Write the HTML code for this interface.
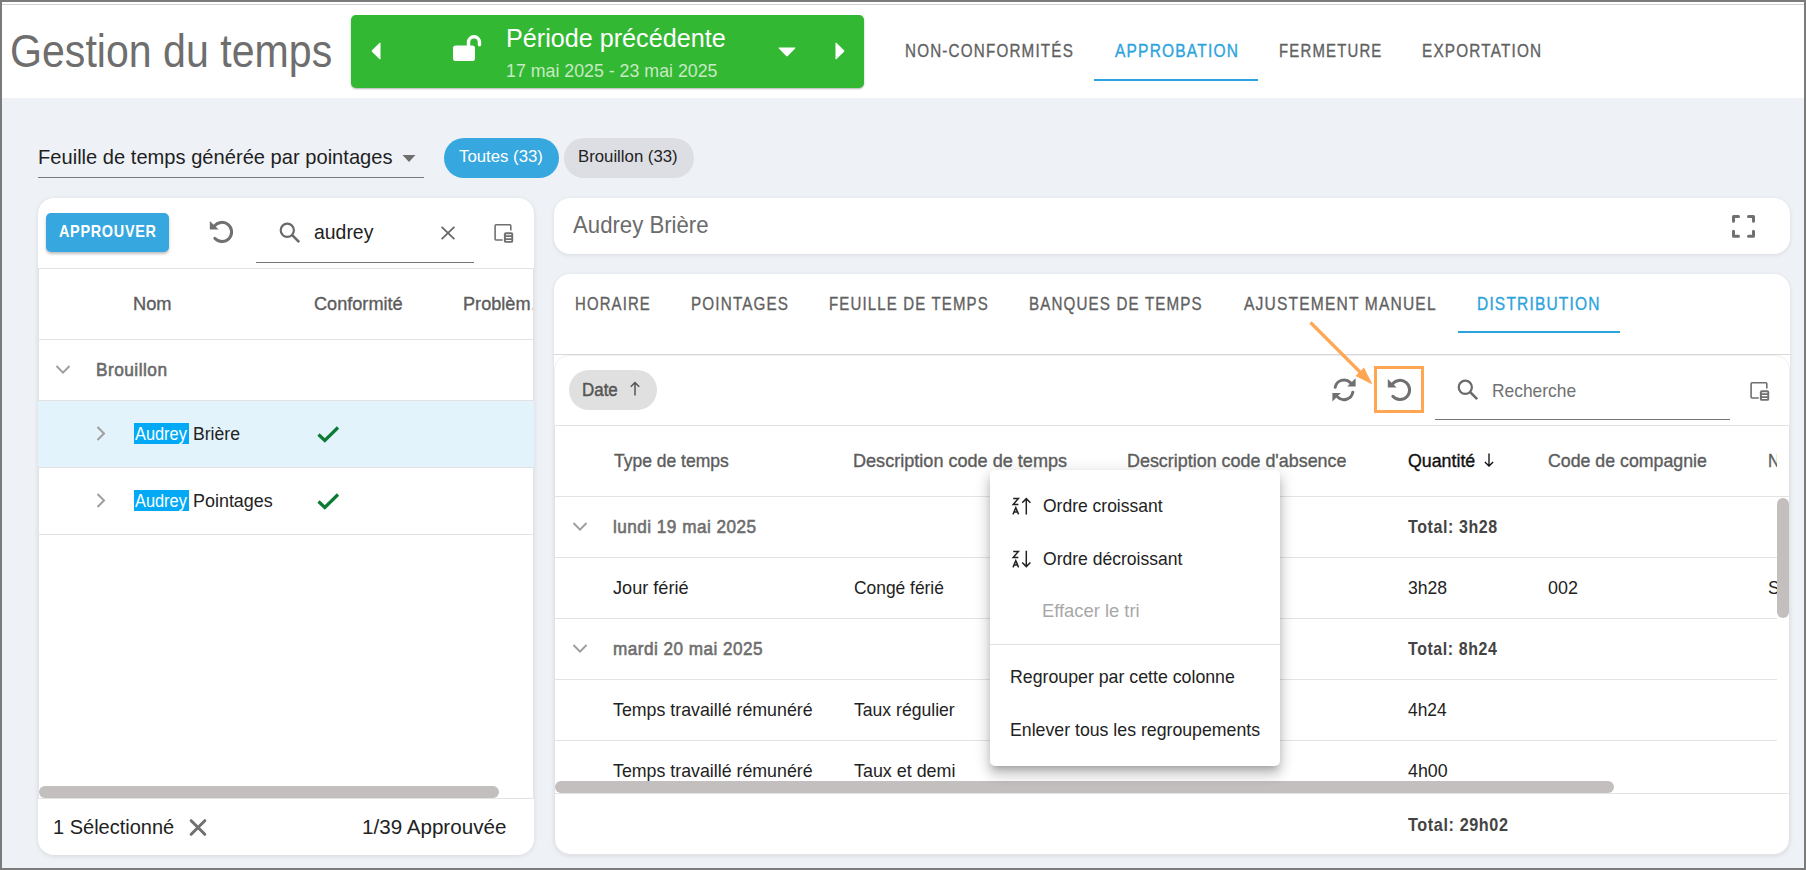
<!DOCTYPE html>
<html><head><meta charset="utf-8"><title>Gestion du temps</title><style>*{margin:0;padding:0;box-sizing:border-box}
html,body{width:1806px;height:870px;overflow:hidden;background:#eef1f6}
body{position:relative;font-family:"Liberation Sans",sans-serif}
.tx{position:absolute;white-space:nowrap;transform-origin:0 0;font-family:"Liberation Sans",sans-serif}
</style></head>
<body>
<div style="position:absolute;left:0px;top:0px;width:1806px;height:870px;background:#eef1f6"></div>
<div style="position:absolute;left:2px;top:2px;width:1802px;height:96px;background:#ffffff"></div>
<div style="position:absolute;left:2px;top:4px;width:1802px;height:1px;background:#cfd2d2"></div>
<div style="position:absolute;left:351px;top:15px;width:513px;height:73px;background:#33b833;border-radius:5px;box-shadow:0 1px 2px rgba(0,0,0,0.3)"></div>
<svg style="position:absolute;left:369px;top:41px;width:14px;height:20px;overflow:visible" viewBox="0 0 14 20"><path d="M11.5 2.2 L11.5 17.8 Q11.5 19.2 10.4 18.1 L3 10.8 Q2.2 10 3 9.2 L10.4 1.9 Q11.5 0.8 11.5 2.2Z" fill="#fff"/></svg>
<svg style="position:absolute;left:833px;top:41px;width:14px;height:20px;overflow:visible" viewBox="0 0 14 20"><path d="M2.5 2.2 L2.5 17.8 Q2.5 19.2 3.6 18.1 L11 10.8 Q11.8 10 11 9.2 L3.6 1.9 Q2.5 0.8 2.5 2.2Z" fill="#fff"/></svg>
<svg style="position:absolute;left:777px;top:45px;width:20px;height:14px;overflow:visible" viewBox="0 0 20 14"><path d="M2.2 2.5 L17.8 2.5 Q19.2 2.5 18.1 3.6 L10.8 11 Q10 11.8 9.2 11 L1.9 3.6 Q0.8 2.5 2.2 2.5Z" fill="#fff"/></svg>
<svg style="position:absolute;left:450px;top:33px;width:34px;height:30px;overflow:visible" viewBox="0 0 34 30"><rect x="3" y="12.5" width="22" height="15.5" rx="2.8" fill="#fff"/><path d="M18.5 13 V9.3 A5.5 5.5 0 0 1 29.5 9.3 V11.8" fill="none" stroke="#fff" stroke-width="3.4" stroke-linecap="round"/></svg>
<div style="position:absolute;left:1094px;top:79px;width:164px;height:2px;background:#2ba3dd"></div>
<div style="position:absolute;left:38px;top:177px;width:386px;height:1px;background:#7a7a7a"></div>
<svg style="position:absolute;left:401px;top:154px;width:16px;height:10px;overflow:visible" viewBox="0 0 16 10"><path d="M1.5 1 L14.5 1 L8 8Z" fill="#6f6f6f"/></svg>
<div style="position:absolute;left:444px;top:138px;width:115px;height:40px;background:#36a7df;border-radius:20px"></div>
<div style="position:absolute;left:564px;top:138px;width:130px;height:40px;background:#dcdee3;border-radius:20px"></div>
<div style="position:absolute;left:38px;top:198px;width:496px;height:657px;background:#fff;border-radius:16px;box-shadow:0 1px 5px rgba(0,0,0,0.10)"></div>
<div style="position:absolute;left:38px;top:268px;width:496px;height:531px;border:1px solid #e3e3e3;border-top:none;border-bottom:none"></div>
<div style="position:absolute;left:46px;top:213px;width:123px;height:39px;background:#36a7df;border-radius:5px;box-shadow:0 2px 3px rgba(0,0,0,0.25)"></div>
<svg style="position:absolute;left:208px;top:219px;width:28px;height:28px;overflow:visible" viewBox="0 0 28 28"><path d="M6.3 7.2 A9.6 9.6 0 1 1 6.8 19.3" fill="none" stroke="#707070" stroke-width="3" stroke-linecap="round"/><path d="M1.8 2 L1.8 10.6 L10.6 10.6Z" fill="#707070"/></svg>
<svg style="position:absolute;left:278px;top:221px;width:24px;height:24px;overflow:visible" viewBox="0 0 24 24"><circle cx="9.3" cy="9.3" r="6.6" fill="none" stroke="#6a6a6a" stroke-width="2.2"/><path d="M14.2 14.2 L21.2 21.2" stroke="#6a6a6a" stroke-width="2.6"/></svg>
<svg style="position:absolute;left:438px;top:224px;width:20px;height:18px;overflow:visible" viewBox="0 0 20 18"><path d="M3.6 2.8 L16.4 15.2 M16.4 2.8 L3.6 15.2" stroke="#6a6a6a" stroke-width="1.8" fill="none"/></svg>
<div style="position:absolute;left:256px;top:262px;width:218px;height:1px;background:#757575"></div>
<svg style="position:absolute;left:493px;top:223px;width:24px;height:24px;overflow:visible" viewBox="0 0 24 24"><path d="M9.7 17 H3 Q2.1 17 2.1 16.1 V2.7 Q2.1 1.8 3 1.8 H16.9 Q17.8 1.8 17.8 2.7 V7.6" fill="none" stroke="#707070" stroke-width="1.6"/><rect x="10.9" y="9.3" width="9.3" height="10.5" rx="1.9" fill="#707070"/><path d="M12.9 11.8 H18.3 M12.9 14.6 H18.3 M12.9 17.4 H18.3" stroke="#fff" stroke-width="1.05"/></svg>
<div style="position:absolute;left:38px;top:268px;width:496px;height:1px;background:#e3e3e3"></div>
<div style="position:absolute;left:38px;top:339px;width:496px;height:1px;background:#e3e3e3"></div>
<svg style="position:absolute;left:54px;top:363px;width:18px;height:14px;overflow:visible" viewBox="0 0 18 14"><path d="M2.5 3 L9 9.6 L15.5 3" stroke="#9e9e9e" stroke-width="2" fill="none"/></svg>
<div style="position:absolute;left:38px;top:400px;width:496px;height:1px;background:#e3e3e3"></div>
<div style="position:absolute;left:38px;top:401px;width:496px;height:66px;background:#e3f3fc"></div>
<div style="position:absolute;left:38px;top:467px;width:496px;height:1px;background:#e3e3e3"></div>
<div style="position:absolute;left:38px;top:534px;width:496px;height:1px;background:#e3e3e3"></div>
<svg style="position:absolute;left:94px;top:425px;width:14px;height:18px;overflow:visible" viewBox="0 0 14 18"><path d="M3.5 2 L10 8.5 L3.5 15" stroke="#9e9e9e" stroke-width="2" fill="none"/></svg>
<svg style="position:absolute;left:94px;top:492px;width:14px;height:18px;overflow:visible" viewBox="0 0 14 18"><path d="M3.5 2 L10 8.5 L3.5 15" stroke="#9e9e9e" stroke-width="2" fill="none"/></svg>
<div style="position:absolute;left:134px;top:423px;width:55px;height:21px;background:#03a9f4"></div>
<div style="position:absolute;left:134px;top:490px;width:55px;height:21px;background:#03a9f4"></div>
<svg style="position:absolute;left:315px;top:424px;width:28px;height:20px;overflow:visible" viewBox="0 0 28 20"><path d="M3.5 10.5 L9.8 16.5 L23 3.5" stroke="#0b7a34" stroke-width="3.2" fill="none"/></svg>
<svg style="position:absolute;left:315px;top:491px;width:28px;height:20px;overflow:visible" viewBox="0 0 28 20"><path d="M3.5 10.5 L9.8 16.5 L23 3.5" stroke="#0b7a34" stroke-width="3.2" fill="none"/></svg>
<div style="position:absolute;left:39px;top:786px;width:460px;height:12px;background:#c4bfbf;border-radius:6px"></div>
<div style="position:absolute;left:38px;top:798px;width:496px;height:1px;background:#e3e3e3"></div>
<svg style="position:absolute;left:187px;top:817px;width:22px;height:20px;overflow:visible" viewBox="0 0 22 20"><path d="M4.2 3.7 L17.8 17.3 M17.8 3.7 L4.2 17.3" stroke="#707070" stroke-width="3" stroke-linecap="round" fill="none"/></svg>
<div style="position:absolute;left:554px;top:198px;width:1236px;height:56px;background:#fff;border-radius:16px;box-shadow:0 1px 4px rgba(0,0,0,0.10)"></div>
<svg style="position:absolute;left:1730px;top:213px;width:28px;height:28px;overflow:visible" viewBox="0 0 28 28"><path d="M3.5 8.3 V3.5 H8.5 M18.5 3.5 H23.5 V8.3 M3.5 18.3 V23.2 H8.5 M18.5 23.2 H23.5 V18.3" fill="none" stroke="#707070" stroke-width="3" stroke-linecap="round" stroke-linejoin="round"/></svg>
<div style="position:absolute;left:554px;top:274px;width:1236px;height:581px;background:#fff;border-radius:16px;box-shadow:0 1px 4px rgba(0,0,0,0.10)"></div>
<div style="position:absolute;left:1458px;top:331px;width:162px;height:2px;background:#2ba3dd"></div>
<div style="position:absolute;left:554px;top:354px;width:1236px;height:1px;background:#d9d9d9"></div>
<div style="position:absolute;left:554px;top:355px;width:1236px;height:500px;border:1px solid #f0f0f0;border-radius:14px 14px 16px 16px"></div>
<div style="position:absolute;left:554px;top:425px;width:1236px;height:430px;border:1px solid #e3e3e3;border-top:none;border-radius:0 0 16px 16px"></div>
<div style="position:absolute;left:569px;top:370px;width:88px;height:40px;background:#e0e0e0;border-radius:20px"></div>
<svg style="position:absolute;left:628px;top:380px;width:14px;height:18px;overflow:visible" viewBox="0 0 14 18"><path d="M7 2.5 V15.5 M2.8 6.8 L7 2.5 L11.2 6.8" stroke="#555" stroke-width="1.5" fill="none"/></svg>
<svg style="position:absolute;left:1331.3px;top:376px;width:28px;height:28px;overflow:visible" viewBox="0 0 28 28"><path d="M4.2 11.3 A9 9 0 0 1 19.4 6.6" fill="none" stroke="#707070" stroke-width="3" stroke-linecap="round"/><path d="M24.6 2.2 L24.6 10.6 L16.2 10.6Z" fill="#707070"/><path d="M21.8 16.3 A9 9 0 0 1 6.6 21" fill="none" stroke="#707070" stroke-width="3" stroke-linecap="round"/><path d="M1.4 25.4 L1.4 17 L9.8 17Z" fill="#707070"/></svg>
<svg style="position:absolute;left:1386px;top:377px;width:28px;height:28px;overflow:visible" viewBox="0 0 28 28"><path d="M6.3 7.2 A9.6 9.6 0 1 1 6.8 19.3" fill="none" stroke="#707070" stroke-width="3" stroke-linecap="round"/><path d="M1.8 2 L1.8 10.6 L10.6 10.6Z" fill="#707070"/></svg>
<div style="position:absolute;left:1374px;top:366px;width:50px;height:47px;border:3px solid #ffa652;box-sizing:border-box"></div>
<svg style="position:absolute;left:1300px;top:315px;width:80px;height:80px;overflow:visible" viewBox="0 0 80 80"><path d="M10.5 7.5 L62 59" stroke="#ffa652" stroke-width="3.2" fill="none"/><path d="M72.5 69.5 L55.5 61 L64 52.5Z" fill="#ffa652"/></svg>
<svg style="position:absolute;left:1456px;top:378px;width:24px;height:24px;overflow:visible" viewBox="0 0 24 24"><circle cx="9.3" cy="9.3" r="6.6" fill="none" stroke="#6a6a6a" stroke-width="2.2"/><path d="M14.2 14.2 L21.2 21.2" stroke="#6a6a6a" stroke-width="2.6"/></svg>
<div style="position:absolute;left:1435px;top:419px;width:295px;height:1px;background:#757575"></div>
<svg style="position:absolute;left:1749px;top:381px;width:24px;height:24px;overflow:visible" viewBox="0 0 24 24"><path d="M9.7 17 H3 Q2.1 17 2.1 16.1 V2.7 Q2.1 1.8 3 1.8 H16.9 Q17.8 1.8 17.8 2.7 V7.6" fill="none" stroke="#707070" stroke-width="1.6"/><rect x="10.9" y="9.3" width="9.3" height="10.5" rx="1.9" fill="#707070"/><path d="M12.9 11.8 H18.3 M12.9 14.6 H18.3 M12.9 17.4 H18.3" stroke="#fff" stroke-width="1.05"/></svg>
<div style="position:absolute;left:554px;top:425px;width:1236px;height:1px;background:#e3e3e3"></div>
<div style="position:absolute;left:554px;top:496px;width:1236px;height:1px;background:#e3e3e3"></div>
<div style="position:absolute;left:554px;top:557px;width:1223px;height:1px;background:#e3e3e3"></div>
<div style="position:absolute;left:554px;top:618px;width:1223px;height:1px;background:#e3e3e3"></div>
<div style="position:absolute;left:554px;top:679px;width:1223px;height:1px;background:#e3e3e3"></div>
<div style="position:absolute;left:554px;top:740px;width:1223px;height:1px;background:#e3e3e3"></div>
<svg style="position:absolute;left:571px;top:520px;width:18px;height:14px;overflow:visible" viewBox="0 0 18 14"><path d="M2.5 3 L9 9.6 L15.5 3" stroke="#9e9e9e" stroke-width="2" fill="none"/></svg>
<svg style="position:absolute;left:571px;top:642px;width:18px;height:14px;overflow:visible" viewBox="0 0 18 14"><path d="M2.5 3 L9 9.6 L15.5 3" stroke="#9e9e9e" stroke-width="2" fill="none"/></svg>
<svg style="position:absolute;left:1481.6px;top:452px;width:14px;height:16px;overflow:visible" viewBox="0 0 14 16"><path d="M7 1.5 V14 M2.9 9.9 L7 14 L11.1 9.9" stroke="#111" stroke-width="1.35" fill="none"/></svg>
<div style="position:absolute;left:1777px;top:498px;width:12px;height:120px;background:#c4bfbf;border-radius:6px"></div>
<div style="position:absolute;left:555px;top:781px;width:1059px;height:12px;background:#c4bfbf;border-radius:6px"></div>
<div style="position:absolute;left:554px;top:793px;width:1236px;height:1px;background:#e3e3e3"></div>
<div style="position:absolute;left:990px;top:470px;width:290px;height:296px;background:#fff;border-radius:5px;box-shadow:0 5px 6px -3px rgba(0,0,0,0.2),0 9px 12px 1px rgba(0,0,0,0.14),0 3px 16px 2px rgba(0,0,0,0.12)"></div>
<div style="position:absolute;left:990px;top:644px;width:290px;height:1px;background:#e0e0e0"></div>
<svg style="position:absolute;left:1011px;top:496px;width:22px;height:22px;overflow:visible" viewBox="0 0 22 22"><path d="M2.2 2.4 H7.4 L2.2 8.4 H7.4" stroke="#222" stroke-width="1.5" fill="none"/><path d="M2 18.4 L4.8 11.6 L7.6 18.4 M3 15.9 H6.6" stroke="#222" stroke-width="1.5" fill="none"/><path d="M15.3 2.6 V18.4 M11.2 6.7 L15.3 2.6 L19.4 6.7" stroke="#222" stroke-width="1.5" fill="none"/></svg>
<svg style="position:absolute;left:1011px;top:549px;width:22px;height:22px;overflow:visible" viewBox="0 0 22 22"><path d="M2.2 2.4 H7.4 L2.2 8.4 H7.4" stroke="#222" stroke-width="1.5" fill="none"/><path d="M2 18.4 L4.8 11.6 L7.6 18.4 M3 15.9 H6.6" stroke="#222" stroke-width="1.5" fill="none"/><path d="M15.3 1.8 V17.6 M11.2 13.5 L15.3 17.6 L19.4 13.5" stroke="#222" stroke-width="1.5" fill="none"/></svg>
<div id="t_title" class="tx" style="left:10.00px;top:23.99px;font-size:46.5px;line-height:55.8px;font-weight:400;color:#6e6e6e;transform:scaleX(0.8841);">Gestion du temps</div>
<div id="t_period" class="tx" style="left:506.00px;top:23.37px;font-size:25.6px;line-height:30.72px;font-weight:400;color:#ffffff;transform:scaleX(0.9831);">Période précédente</div>
<div id="t_range" class="tx" style="left:506.00px;top:61.37px;font-size:18.2px;line-height:21.84px;font-weight:400;color:#c6eac3;transform:scaleX(0.9772);">17 mai 2025 - 23 mai 2025</div>
<div id="t_tab1" class="tx" style="left:905.00px;top:40.56px;font-size:18px;line-height:21.6px;font-weight:400;color:#616161;transform:scaleX(0.8448);-webkit-text-stroke:0.35px #616161;letter-spacing:1.4px;">NON-CONFORMITÉS</div>
<div id="t_tab2" class="tx" style="left:1115.00px;top:40.56px;font-size:18px;line-height:21.6px;font-weight:400;color:#2ba3dd;transform:scaleX(0.8611);-webkit-text-stroke:0.35px #2ba3dd;letter-spacing:1.4px;">APPROBATION</div>
<div id="t_tab3" class="tx" style="left:1279.00px;top:40.56px;font-size:18px;line-height:21.6px;font-weight:400;color:#616161;transform:scaleX(0.8304);-webkit-text-stroke:0.35px #616161;letter-spacing:1.4px;">FERMETURE</div>
<div id="t_tab4" class="tx" style="left:1422.00px;top:40.56px;font-size:18px;line-height:21.6px;font-weight:400;color:#616161;transform:scaleX(0.8508);-webkit-text-stroke:0.35px #616161;letter-spacing:1.4px;">EXPORTATION</div>
<div id="t_feuille" class="tx" style="left:38.00px;top:144.68px;font-size:20.2px;line-height:24.24px;font-weight:400;color:#1f1f1f;transform:scaleX(0.9965);">Feuille de temps générée par pointages</div>
<div id="t_chip1" class="tx" style="left:459.00px;top:147.47px;font-size:16.3px;line-height:19.56px;font-weight:400;color:#ffffff;transform:scaleX(1.0304);">Toutes (33)</div>
<div id="t_chip2" class="tx" style="left:578.00px;top:147.47px;font-size:16.3px;line-height:19.56px;font-weight:400;color:#222222;transform:scaleX(1.0291);">Brouillon (33)</div>
<div id="t_approuver" class="tx" style="left:59.00px;top:221.99px;font-size:16.7px;line-height:20.04px;font-weight:700;color:#ffffff;transform:scaleX(0.8648);letter-spacing:0.8px;">APPROUVER</div>
<div id="t_audrey" class="tx" style="left:314.00px;top:219.68px;font-size:20.2px;line-height:24.24px;font-weight:400;color:#222222;transform:scaleX(0.9613);">audrey</div>
<div id="t_nom" class="tx" style="left:133.00px;top:294.17px;font-size:18.2px;line-height:21.84px;font-weight:400;color:#5c5c5c;transform:scaleX(1.0049);-webkit-text-stroke:0.35px #5c5c5c;">Nom</div>
<div id="t_conf" class="tx" style="left:314.00px;top:294.17px;font-size:18.2px;line-height:21.84px;font-weight:400;color:#5c5c5c;transform:scaleX(0.9966);-webkit-text-stroke:0.35px #5c5c5c;">Conformité</div>
<div style="position:absolute;left:0px;top:0;width:533px;height:870px;overflow:hidden"><div id="t_prob" class="tx" style="left:463.00px;top:294.17px;font-size:18.2px;line-height:21.84px;font-weight:400;color:#5c5c5c;transform:scaleX(0.9966);-webkit-text-stroke:0.35px #5c5c5c;">Problèm…</div></div>
<div id="t_brouillon" class="tx" style="left:96.00px;top:359.28px;font-size:18.3px;line-height:21.96px;font-weight:400;color:#6b6b6b;transform:scaleX(0.9448);-webkit-text-stroke:0.6px #6b6b6b;letter-spacing:0.5px;">Brouillon</div>
<div id="t_r1b" class="tx" style="left:193.00px;top:423.31px;font-size:18.9px;line-height:22.68px;font-weight:400;color:#222222;transform:scaleX(0.9323);">Brière</div>
<div id="t_r2b" class="tx" style="left:193.00px;top:490.31px;font-size:18.9px;line-height:22.68px;font-weight:400;color:#222222;transform:scaleX(0.9493);">Pointages</div>
<div id="t_r1a" class="tx" style="left:135.00px;top:423.31px;font-size:18.9px;line-height:22.68px;font-weight:400;color:#ffffff;transform:scaleX(0.8655);">Audrey</div>
<div id="t_r2a" class="tx" style="left:135.00px;top:490.31px;font-size:18.9px;line-height:22.68px;font-weight:400;color:#ffffff;transform:scaleX(0.8655);">Audrey</div>
<div id="t_sel" class="tx" style="left:53.00px;top:815.48px;font-size:20.2px;line-height:24.24px;font-weight:400;color:#222222;transform:scaleX(0.9907);">1 Sélectionné</div>
<div id="t_appr" class="tx" style="left:362.00px;top:815.48px;font-size:20.2px;line-height:24.24px;font-weight:400;color:#222222;transform:scaleX(1.0208);">1/39 Approuvée</div>
<div id="t_name" class="tx" style="left:573.00px;top:210.40px;font-size:24.3px;line-height:29.16px;font-weight:400;color:#6b6b6b;transform:scaleX(0.9128);">Audrey Brière</div>
<div id="t_ctab1" class="tx" style="left:575.00px;top:292.89px;font-size:18.5px;line-height:22.2px;font-weight:400;color:#616161;transform:scaleX(0.8070);-webkit-text-stroke:0.35px #616161;letter-spacing:1.4px;">HORAIRE</div>
<div id="t_ctab2" class="tx" style="left:691.00px;top:292.89px;font-size:18.5px;line-height:22.2px;font-weight:400;color:#616161;transform:scaleX(0.8240);-webkit-text-stroke:0.35px #616161;letter-spacing:1.4px;">POINTAGES</div>
<div id="t_ctab3" class="tx" style="left:829.00px;top:292.89px;font-size:18.5px;line-height:22.2px;font-weight:400;color:#616161;transform:scaleX(0.8121);-webkit-text-stroke:0.35px #616161;letter-spacing:1.4px;">FEUILLE DE TEMPS</div>
<div id="t_ctab4" class="tx" style="left:1029.00px;top:292.89px;font-size:18.5px;line-height:22.2px;font-weight:400;color:#616161;transform:scaleX(0.8190);-webkit-text-stroke:0.35px #616161;letter-spacing:1.4px;">BANQUES DE TEMPS</div>
<div id="t_ctab5" class="tx" style="left:1244.00px;top:292.89px;font-size:18.5px;line-height:22.2px;font-weight:400;color:#616161;transform:scaleX(0.8416);-webkit-text-stroke:0.35px #616161;letter-spacing:1.4px;">AJUSTEMENT MANUEL</div>
<div id="t_ctab6" class="tx" style="left:1477.00px;top:292.89px;font-size:18.5px;line-height:22.2px;font-weight:400;color:#2ba3dd;transform:scaleX(0.8385);-webkit-text-stroke:0.35px #2ba3dd;letter-spacing:1.4px;">DISTRIBUTION</div>
<div id="t_date" class="tx" style="left:582.00px;top:378.68px;font-size:18.3px;line-height:21.96px;font-weight:400;color:#555555;transform:scaleX(0.9269);-webkit-text-stroke:0.45px #555555;">Date</div>
<div id="t_rech" class="tx" style="left:1492.00px;top:380.00px;font-size:18.6px;line-height:22.32px;font-weight:400;color:#707070;transform:scaleX(0.9350);">Recherche</div>
<div id="t_h1" class="tx" style="left:614.00px;top:451.26px;font-size:17.9px;line-height:21.48px;font-weight:400;color:#5c5c5c;transform:scaleX(0.9774);-webkit-text-stroke:0.35px #5c5c5c;">Type de temps</div>
<div id="t_h2" class="tx" style="left:853.00px;top:451.26px;font-size:17.9px;line-height:21.48px;font-weight:400;color:#5c5c5c;transform:scaleX(1.0107);-webkit-text-stroke:0.35px #5c5c5c;">Description code de temps</div>
<div id="t_h3" class="tx" style="left:1127.00px;top:451.26px;font-size:17.9px;line-height:21.48px;font-weight:400;color:#5c5c5c;transform:scaleX(1.0011);-webkit-text-stroke:0.35px #5c5c5c;">Description code d'absence</div>
<div id="t_h4" class="tx" style="left:1408.00px;top:450.66px;font-size:17.9px;line-height:21.48px;font-weight:400;color:#111111;transform:scaleX(0.9942);-webkit-text-stroke:0.35px #111111;">Quantité</div>
<div id="t_h5" class="tx" style="left:1548.00px;top:451.26px;font-size:17.9px;line-height:21.48px;font-weight:400;color:#5c5c5c;transform:scaleX(0.9921);-webkit-text-stroke:0.35px #5c5c5c;">Code de compagnie</div>
<div style="position:absolute;left:0px;top:0;width:1777px;height:870px;overflow:hidden"><div id="t_h6" class="tx" style="left:1768.00px;top:451.26px;font-size:17.9px;line-height:21.48px;font-weight:400;color:#5c5c5c;transform:scaleX(0.9200);-webkit-text-stroke:0.35px #5c5c5c;">N</div></div>
<div id="t_g1" class="tx" style="left:613.00px;top:516.00px;font-size:18.6px;line-height:22.32px;font-weight:400;color:#6e6e6e;transform:scaleX(0.9242);-webkit-text-stroke:0.6px #6e6e6e;letter-spacing:0.5px;">lundi 19 mai 2025</div>
<div id="t_g1t" class="tx" style="left:1408.00px;top:516.00px;font-size:18.6px;line-height:22.32px;font-weight:700;color:#444444;transform:scaleX(0.8599);letter-spacing:0.7px;">Total: 3h28</div>
<div id="t_d1a" class="tx" style="left:613.00px;top:576.82px;font-size:19px;line-height:22.8px;font-weight:400;color:#222222;transform:scaleX(0.9545);">Jour férié</div>
<div id="t_d1b" class="tx" style="left:854.00px;top:576.82px;font-size:19px;line-height:22.8px;font-weight:400;color:#222222;transform:scaleX(0.9153);">Congé férié</div>
<div id="t_d1c" class="tx" style="left:1408.00px;top:576.82px;font-size:19px;line-height:22.8px;font-weight:400;color:#222222;transform:scaleX(0.9262);">3h28</div>
<div id="t_d1d" class="tx" style="left:1548.00px;top:576.82px;font-size:19px;line-height:22.8px;font-weight:400;color:#222222;transform:scaleX(0.9427);">002</div>
<div style="position:absolute;left:0px;top:0;width:1777px;height:870px;overflow:hidden"><div id="t_d1e" class="tx" style="left:1768.00px;top:576.82px;font-size:19px;line-height:22.8px;font-weight:400;color:#222222;transform:scaleX(0.9200);">S</div></div>
<div id="t_g2" class="tx" style="left:613.00px;top:638.20px;font-size:18.6px;line-height:22.32px;font-weight:400;color:#6e6e6e;transform:scaleX(0.9233);-webkit-text-stroke:0.6px #6e6e6e;letter-spacing:0.5px;">mardi 20 mai 2025</div>
<div id="t_g2t" class="tx" style="left:1408.00px;top:638.20px;font-size:18.6px;line-height:22.32px;font-weight:700;color:#444444;transform:scaleX(0.8561);letter-spacing:0.7px;">Total: 8h24</div>
<div id="t_d2a" class="tx" style="left:613.00px;top:699.02px;font-size:19px;line-height:22.8px;font-weight:400;color:#222222;transform:scaleX(0.9356);">Temps travaillé rémunéré</div>
<div id="t_d2b" class="tx" style="left:854.00px;top:699.02px;font-size:19px;line-height:22.8px;font-weight:400;color:#222222;transform:scaleX(0.9258);">Taux régulier</div>
<div id="t_d2c" class="tx" style="left:1408.00px;top:699.02px;font-size:19px;line-height:22.8px;font-weight:400;color:#222222;transform:scaleX(0.9128);">4h24</div>
<div id="t_d3a" class="tx" style="left:613.00px;top:759.62px;font-size:19px;line-height:22.8px;font-weight:400;color:#222222;transform:scaleX(0.9356);">Temps travaillé rémunéré</div>
<div id="t_d3b" class="tx" style="left:854.00px;top:759.62px;font-size:19px;line-height:22.8px;font-weight:400;color:#222222;transform:scaleX(0.9417);">Taux et demi</div>
<div id="t_d3c" class="tx" style="left:1408.00px;top:759.62px;font-size:19px;line-height:22.8px;font-weight:400;color:#222222;transform:scaleX(0.9362);">4h00</div>
<div id="t_tot" class="tx" style="left:1408.00px;top:814.20px;font-size:18.6px;line-height:22.32px;font-weight:700;color:#444444;transform:scaleX(0.8709);letter-spacing:0.7px;">Total: 29h02</div>
<div id="t_m1" class="tx" style="left:1043.00px;top:495.40px;font-size:18.6px;line-height:22.32px;font-weight:400;color:#222222;transform:scaleX(0.9405);">Ordre croissant</div>
<div id="t_m2" class="tx" style="left:1043.00px;top:548.40px;font-size:18.6px;line-height:22.32px;font-weight:400;color:#222222;transform:scaleX(0.9430);">Ordre décroissant</div>
<div id="t_m3" class="tx" style="left:1042.00px;top:600.20px;font-size:18.6px;line-height:22.32px;font-weight:400;color:#a8a8a8;transform:scaleX(0.9876);">Effacer le tri</div>
<div id="t_m4" class="tx" style="left:1010.00px;top:666.20px;font-size:18.6px;line-height:22.32px;font-weight:400;color:#222222;transform:scaleX(0.9541);">Regrouper par cette colonne</div>
<div id="t_m5" class="tx" style="left:1010.00px;top:718.80px;font-size:18.6px;line-height:22.32px;font-weight:400;color:#222222;transform:scaleX(0.9525);">Enlever tous les regroupements</div>
<div style="position:absolute;left:0;top:0;width:1806px;height:870px;border:2px solid #7b7b7b;pointer-events:none"></div>
</body></html>
